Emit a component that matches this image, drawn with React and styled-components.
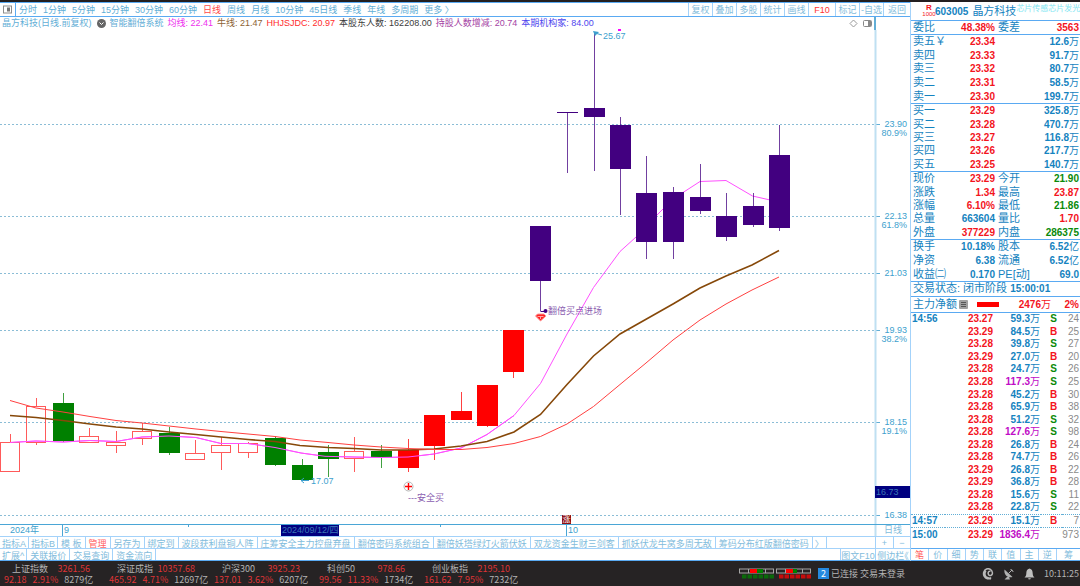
import React from "react";
import styled, { createGlobalStyle } from "styled-components";

const SANS = '"Liberation Sans", "Noto Sans CJK SC", sans-serif';
const c = {
  line: "#5aaaf2",
  soft: "#a3d2fa",
  sky: "#62aed6",
  pale: "#82bcdc",
  blue: "#1583c0",
  red: "#f3141d",
  green: "#0a8a0a",
  magenta: "#c00cc6",
  gray: "#8a8a8a",
  navy: "#000080",
  purple: "#420080",
};

const Global = createGlobalStyle`
  * { box-sizing: border-box; }
  body { margin: 0; background: #fff; font-family: ${SANS}; font-size: 9px; }
  button { font: inherit; color: inherit; background: none; border: 0; padding: 0; margin: 0; white-space: nowrap; cursor: pointer; }
  table { border-collapse: collapse; border-spacing: 0; }
  th, td { padding: 0; font-weight: inherit; text-align: left; white-space: nowrap; }
`;

const Page = styled.div`
  display: flex;
  flex-direction: column;
  min-height: 100vh;
  border-top: 2px solid #231f20;
`;
const Main = styled.div`
  display: flex;
  flex: 1;
`;
const ChartColumn = styled.main`
  display: flex;
  flex-direction: column;
  flex: 1;
  min-width: 0;
`;

/* ---------- toolbar ---------- */
const Toolbar = styled.nav`
  display: flex;
  height: 15px;
  border-top: 1px solid ${c.line};
  border-bottom: 1px solid ${c.line};
  color: ${c.sky};
`;
const PanelToggle = styled.button`
  display: flex;
  align-items: center;
  justify-content: center;
  width: 16px;
  border-right: 1px solid ${c.line};
`;
const Periods = styled.div`
  display: flex;
  flex: 1;
  gap: 6px;
  padding-left: 3px;
  overflow: hidden;
`;
const PeriodButton = styled.button`
  color: ${(p) => (p.$active ? "#ff4a4a" : c.sky)};
`;
const ToolButton = styled.button`
  width: ${(p) => (p.$wide ? "27px" : "24px")};
  border-left: 1px solid ${c.soft};
  color: ${(p) => (p.$hot ? "#f33" : c.pale)};
`;

/* ---------- legend ---------- */
const Legend = styled.div`
  display: flex;
  height: 13px;
  line-height: 13px;
  white-space: nowrap;
`;
const LegendItems = styled.div`
  display: flex;
  flex: 1;
  align-items: center;
  gap: 4px;
  padding-left: 2px;
  overflow: hidden;
`;
const Metric = styled.span`
  color: ${(p) => p.$color};
`;
const LegendTitle = styled.span`
  color: ${c.sky};
`;
const LegendTools = styled.div`
  display: flex;
  align-items: center;
  gap: 5px;
  padding-right: 2px;
`;
const AxisGutter = styled.div`
  width: 36px;
  border-left: 2px solid ${c.sky};
`;

/* ---------- chart ---------- */
const ChartSvg = styled.svg`
  display: block;
  width: 100%;
  height: auto;
  overflow: visible;
  font-family: ${SANS};
  font-size: 9px;
`;

/* ---------- bottom tabs ---------- */
const TabRow = styled.nav`
  display: flex;
  height: ${(p) => (p.$last ? "13px" : "12px")};
  border-top: 1px solid ${c.soft};
  border-bottom: ${(p) => (p.$last ? `1px solid ${c.line}` : "0")};
  color: ${c.pale};
`;
const Tab = styled.button`
  padding: 0 ${(p) => (p.$compact ? "2px" : "3px")};
  border-right: 1px solid ${c.soft};
  color: ${(p) => (p.$hot ? "#ff6464" : "inherit")};
`;
const Spacer = styled.div`
  flex: 1;
`;
const SideTab = styled.button`
  width: ${(p) => p.$w}px;
  border-left: 1px solid ${c.soft};
  font-feature-settings: "halt";
`;

/* ---------- quote panel ---------- */
const Quote = styled.aside`
  display: flex;
  flex-direction: column;
  width: 170px;
  flex: none;
  border-left: 1px solid ${c.soft};
  color: ${c.blue};
  font-size: 10px;
  line-height: 13px;
`;
const StockTitle = styled.header`
  display: flex;
  align-items: center;
  height: 19px;
  padding-left: 12px;
  overflow: hidden;
  border-bottom: 1px solid ${c.line};
  white-space: nowrap;
`;
const RankBadge = styled.span`
  display: flex;
  flex-direction: column;
  align-items: center;
  width: 12px;
  font-size: 6px;
  line-height: 7px;
  color: ${c.red};
`;
const RankLetter = styled.b`
  font-size: 8px;
`;
const StockName = styled.span`
  margin-left: 4px;
  font-size: 11px;
`;
const Concepts = styled.span`
  align-self: flex-start;
  font-size: 8px;
  color: #7fe6f2;
`;
const QuoteTable = styled.table`
  width: 100%;
  height: ${(p) => p.$h}px;
  table-layout: fixed;
  border-bottom: 1px solid ${c.line};
`;
const Label = styled.th`
  padding-left: 2px !important;
  font-size: 11px;
  overflow: visible;
`;
const Value = styled.td`
  padding-right: 1px !important;
  text-align: right !important;
  font-weight: bold !important;
  color: ${(p) => c[p.$tone || "blue"]};
`;
const Unit = styled.span`
  font-weight: normal;
`;
const StatusLine = styled.div`
  height: 15px;
  padding-left: 2px;
  border-bottom: 1px solid ${c.line};
  font-size: 11px;
`;
const Clock = styled.b`
  font-size: 10px;
`;
const NetFlow = styled.div`
  display: flex;
  align-items: center;
  height: 16px;
  padding: 0 1px 0 2px;
  border-bottom: 1px solid ${c.line};
  font-size: 11px;
`;
const MenuMark = styled.button`
  display: flex;
  margin: 0 9px 0 2px;
`;
const FlowBar = styled.span`
  width: 22px;
  height: 5px;
  background: #f00;
`;
const FlowValue = styled.b`
  flex: 1;
  text-align: right;
  font-size: 10px;
  color: ${c.red};
`;
const FlowShare = styled.b`
  width: 28px;
  text-align: right;
  font-size: 10px;
  color: ${c.red};
`;
const Ticks = styled.div`
  flex: 1;
`;
const TickTable = styled.table`
  width: 100%;
  height: 228px;
  table-layout: fixed;
  line-height: 12px;
`;
const TickRow = styled.tr`
  border-top: ${(p) => (p.$dotted ? `1px dotted ${c.sky}` : "0")};
`;
const TickTime = styled.th`
  padding-left: 1px !important;
  font-weight: bold !important;
`;
const Side = styled.td`
  padding-left: 4px !important;
  text-align: center !important;
  font-weight: bold !important;
  color: ${(p) => c[p.$tone]};
`;
const Count = styled.td`
  padding-right: 1px !important;
  text-align: right !important;
  color: ${c.gray};
`;
const QuoteTabs = styled.nav`
  display: flex;
  height: 13px;
  border-top: 1px solid ${c.line};
  border-bottom: 1px solid ${c.line};
  font-size: 9px;
  color: ${c.pale};
`;
const QuoteTab = styled.button`
  flex: ${(p) => (p.$last ? "0 0 23px" : "1")};
  border-right: ${(p) => (p.$last ? "0" : `1px solid ${c.soft}`)};
  color: ${(p) => (p.$hot ? "#ff5050" : "inherit")};
`;

/* ---------- status bar ---------- */
const StatusBar = styled.footer`
  display: flex;
  align-items: center;
  height: 25px;
  overflow: hidden;
  background: #262324;
  color: #b4b4b4;
  font-family: "Noto Sans CJK SC", sans-serif;
  font-size: 9px;
  line-height: 11px;
  white-space: nowrap;
`;
const IndexCard = styled.div`
  width: 105px;
  padding-left: 4px;
`;
const IndexHead = styled.div`
  display: flex;
  justify-content: space-between;
  width: 78px;
  margin-left: 8px;
`;
const IndexBody = styled.div`
  display: flex;
  gap: 6px;
`;
const Rise = styled.span`
  color: #df3436;
`;
const Meters = styled.svg`
  margin-left: auto;
  flex: none;
`;
const Connection = styled.div`
  display: flex;
  align-items: center;
  gap: 2px;
  width: 164px;
  margin-left: 6px;
`;
const CountBadge = styled.span`
  width: 11px;
  background: #2589e0;
  color: #fff;
  text-align: center;
`;
const StatusIcons = styled.div`
  display: flex;
  align-items: center;
  gap: 9px;
  margin-right: 9px;
`;
const StatusTime = styled.time`
  padding-right: 1px;
`;

/* ---------- data ---------- */
const periods = ["分时", "1分钟", "5分钟", "15分钟", "30分钟", "60分钟", "日线", "周线", "月线", "10分钟", "45日线", "季线", "年线", "多周期", "更多 〉"];
const tools = ["复权", "叠加", "多股", "统计", "画线", "F10", "标记", "-自选", "返回"];
const metrics = [
  ["均线: 22.41", "#ee2fee"],
  ["牛线: 21.47", "#8d6234"],
  ["HHJSJDC: 20.97", "#ff2b2b"],
  ["本股东人数: 162208.00", "#3c3c3c"],
  ["持股人数增减: 20.74", "#a443a4"],
  ["本期机构家: 84.00", "#4f46ee"],
];
const tabs = ["指标A", "指标B", "模 板", "管理", "另存为", "绑定到", "波段获利盘铜人阵", "庄筹安全主力控盘弃盘", "翻倍密码系统组合", "翻倍妖塔绿灯火箭伏妖", "双龙资金生财三剑客", "抓妖伏龙牛窝多周无敌", "筹码分布红版翻倍密码", "〉"];
const extras = ["扩展^", "关联报价", "交易查询", "资金流向"];

const asks = [["卖五￥", "23.34", "12.6"], ["卖四", "23.33", "91.7"], ["卖三", "23.32", "80.7"], ["卖二", "23.31", "58.5"], ["卖一", "23.30", "199.7"]];
const bids = [["买一", "23.29", "325.8"], ["买二", "23.28", "470.7"], ["买三", "23.27", "116.8"], ["买四", "23.26", "217.7"], ["买五", "23.25", "140.7"]];
const book = (rows) => rows.map(([l, p, v]) => [l, p, "red", "", v, "blue", "万"]);
const ratio = [["委比", "48.38%", "red", "委差", "3563", "red"]];
const stats = [
  ["现价", "23.29", "red", "今开", "21.90", "green"],
  ["涨跌", "1.34", "red", "最高", "23.87", "red"],
  ["涨幅", "6.10%", "red", "最低", "21.86", "green"],
  ["总量", "663604", "blue", "量比", "1.70", "red"],
  ["外盘", "377229", "red", "内盘", "286375", "green"],
];
const finance = [
  ["换手", "10.18%", "blue", "股本", "6.52", "blue", "亿"],
  ["净资", "6.38", "blue", "流通", "6.52", "blue", "亿"],
  ["收益㈡", "0.170", "blue", "PE[动]", "69.0", "blue"],
];
const ticks = [
  ["14:56", "23.27", "59.3", "S", 24], ["", "23.29", "84.5", "B", 25], ["", "23.28", "39.8", "S", 27],
  ["", "23.29", "27.0", "B", 20], ["", "23.28", "24.7", "S", 26], ["", "23.28", "117.3", "S", 25],
  ["", "23.28", "45.2", "B", 30], ["", "23.28", "65.9", "B", 38], ["", "23.28", "51.2", "S", 32],
  ["", "23.28", "127.6", "S", 98], ["", "23.28", "26.8", "B", 24], ["", "23.28", "74.7", "B", 26],
  ["", "23.29", "26.8", "B", 22], ["", "23.29", "36.8", "B", 28], ["", "23.28", "15.6", "S", 11],
  ["", "23.28", "22.8", "S", 22], ["14:57", "23.29", "15.1", "B", 7], ["15:00", "23.29", "1836.4", "", 973],
];
const indices = [
  ["上证指数", "3261.56", "92.18", "2.91%", "8279亿"],
  ["深证成指", "10357.68", "465.92", "4.71%", "12697亿"],
  ["沪深300", "3925.23", "137.01", "3.62%", "6207亿"],
  ["科创50", "978.66", "99.56", "11.33%", "1734亿"],
  ["创业板指", "2195.10", "161.62", "7.95%", "7232亿"],
];

/* candle: [kind, x, body top, body bottom, wick top, wick bottom] */
const candles = [
  ["h", 10, 442, 471, 434, 471], ["h", 36, 406, 442, 398, 445], ["g", 63, 403, 441, 393, 442],
  ["h", 89, 436, 442, 428, 442], ["h", 116, 442, 445, 431, 453], ["h", 142, 431, 438, 423, 445],
  ["g", 169, 433, 453, 427, 455], ["h", 195, 453, 459, 440, 460], ["h", 221, 445, 452, 437, 470],
  ["h", 248, 443, 452, 442, 458], ["g", 275, 438, 465, 436, 466], ["g", 302, 465, 480, 459, 481],
  ["g", 328, 452, 459, 445, 477], ["h", 354, 451, 458, 437, 472], ["g", 381, 451, 457, 445, 468],
  ["r", 408, 450, 468, 439, 472], ["r", 434, 415, 446, 415, 460], ["r", 461, 411, 420, 392, 420],
  ["r", 487, 385, 426, 385, 427], ["r", 513, 330, 372, 330, 378], ["p", 540, 226, 281, 226, 311],
  ["p", 567, 112, 113, 112, 173], ["p", 594, 108, 117, 32, 171], ["p", 620, 125, 169, 117, 215],
  ["p", 646, 193, 242, 156, 259], ["p", 673, 192, 242, 187, 259], ["p", 700, 197, 211, 164, 214],
  ["p", 726, 216, 237, 193, 241], ["p", 753, 206, 225, 193, 227], ["p", 779, 155, 228, 125, 231],
];
const fills = { g: "#008000", r: "#ff0000", p: c.purple };
const maFast = "10,442.5 36,441 63,442 90,440.5 116,441.5 142,437 169,436 196,437.5 221,443.5 248,443.5 275,447.5 301,453 325,456.3 354,457 381,457.5 408,457 434,454 461,448 487,434.5 514,415.5 540.5,383.5 567,334 593.5,287.5 620,251.5 646,228 657,215 663,209 683,192.5 700,181.5 726,180.5 752.5,196 779,202";
const maBull = "10,415.5 36,417.5 63,420.5 90,424 116,427 142,429 169,432 196,434.5 221,437 248,439.5 275,441.5 300,445.5 328,447.5 354,448.5 381,450 408,450 434,449 461,446 487,441.5 514,432 540.5,414.5 567,384.5 593.5,356 620,334 646.5,319 673,304 700,288 726,276 752,265 779,250.5";
const maSlow = "10,400.5 36,408 63,412 90,416.5 116,420.5 142,423 169,426 196,429 221,431.5 248,434 275,436.5 300,440 328,442.5 354,445 381,447 408,448.5 434,449.5 461,449.5 487,447.5 514,443.5 540.5,436.5 567,424 593.5,406.5 620,384.5 646,363 673,340 700,320 726,304 752,290 779,277";
const levels = [[124, "23.90", "80.9%"], [216, "22.13", "61.8%"], [273, "21.03"], [330, "19.93", "38.2%"], [422, "18.15", "19.1%"], [515, "16.38"]];

/* ---------- parts ---------- */
function Candle({ d: [kind, x, top, bottom, high, low] }) {
  if (kind === "h") {
    return (
      <g stroke="#ff5a5a" fill="none">
        <path d={`M${x + 0.5} ${high}V${top}M${x + 0.5} ${bottom}V${low}`} />
        <rect x={x - 9.5} y={top + 0.5} width="19" height={bottom - top} />
      </g>
    );
  }
  const f = fills[kind];
  return (
    <g>
      <path d={`M${x + 0.5} ${high}V${low}`} stroke={f} strokeOpacity="0.75" />
      <rect x={x - 10} y={top} width="21" height={bottom - top} fill={f} />
    </g>
  );
}

function Chart() {
  return (
    <ChartSvg viewBox="0 30 910 506" role="img" aria-label="K线图">
      {levels.map(([y, price, pct]) => (
        <g key={y} fill="#3d9fce">
          <path d={`M0 ${y + 0.5}H875`} stroke="#8bbdd6" strokeDasharray="2 2" />
          <path d={`M875 ${y + 0.5}H880`} stroke={c.sky} />
          <text x="907" y={y + 3} textAnchor="end">{price}</text>
          {pct && <text x="907" y={y + 12} textAnchor="end">{pct}</text>}
        </g>
      ))}
      <path d="M875.5 30V536" stroke="#bfe0f2" strokeWidth="2" />
      <g fill="none">
        <polyline points={maFast} stroke="#ff50ff" />
      </g>
      {candles.map((d) => <Candle key={d[1]} d={d} />)}
      <g fill="none">
        <polyline points={maFast.split(" ").slice(0, 20).join(" ")} stroke="#ff50ff" />
        <polyline points={maBull} stroke="#864809" strokeWidth="1.6" />
        <polyline points={maSlow} stroke="#ff4040" />
      </g>

      <g fill="#3d9fce" stroke="none">
        <path d="M593 31l6 1-4 4z" />
        <path d="M595 33l7 2" stroke="#3d9fce" />
        <text x="603" y="39">25.67</text>
        <path d="M301 480.500h8M304 478l-3 2.500 3 2.500" stroke="#3d9fce" fill="none" />
        <text x="311" y="484">17.07</text>
      </g>
      <rect x="618" y="29" width="3" height="2" fill="#f0f" />

      <path d="M540.500 311.500h4" stroke={c.purple} />
      <circle cx="545.5" cy="311" r="2" fill={c.purple} />
      <text x="548" y="314" fill="#8a5db0">翻倍买点进场</text>
      <path d="M537.500 314h6.500l2 2-5.500 5-5-5z" fill="#f22" stroke="#ff9a9a" />
      <path d="M537.500 316.500h6M540.500 317v2" stroke="#fff" strokeOpacity="0.6" />

      <circle cx="408.5" cy="486.500" r="4.5" fill="#fff" stroke="#b5b5b5" />
      <path d="M405 486.500h7M408.500 483v7" stroke="#f00" strokeWidth="1.4" />
      <text x="408" y="501" fill="#8a5db0">---安全买</text>

      <rect x="562" y="515" width="9" height="9" fill="#8f1010" />
      <text x="562.5" y="522" fill="#fff" style={{ fontSize: 8 }}>涨</text>

      <path d="M0 524.500H910" stroke="#4aa6d6" />
      <path d="M188.500 524v3M440.500 524v3M62.500 524v12M566.500 524v12" stroke="#4aa6d6" />
      <g fill="#3d9fce">
        <text x="10" y="533">2024年</text>
        <text x="64" y="533">9</text>
        <text x="568" y="533">10</text>
        <text x="884" y="533" fill={c.pale}>日线</text>
      </g>
      <rect x="281" y="525" width="58" height="11" fill={c.navy} />
      <text x="282" y="533" fill="#3c78b4">2024/09/12/四</text>
      <rect x="875" y="486" width="36" height="12" fill={c.navy} />
      <text x="876" y="495" fill="#3c78b4">16.73</text>
    </ChartSvg>
  );
}

function QuoteGrid({ rows, height }) {
  return (
    <QuoteTable $h={height}>
      <colgroup>
        <col style={{ width: 36 }} />
        <col style={{ width: 49 }} />
        <col style={{ width: 34 }} />
        <col />
      </colgroup>
      <tbody>
        {rows.map(([a, av, at, b, bv, bt, unit]) => (
          <tr key={a}>
            <Label scope="row">{a}</Label>
            <Value $tone={at}>{av}</Value>
            <Label>{b}</Label>
            <Value $tone={bt}>{bv}{unit && <Unit>{unit}</Unit>}</Value>
          </tr>
        ))}
      </tbody>
    </QuoteTable>
  );
}

function QuotePanel() {
  return (
    <Quote>
      <StockTitle>
        <RankBadge><RankLetter>R</RankLetter>1000</RankBadge>
        <b>603005</b>
        <StockName>晶方科技</StockName>
        <Concepts>芯片传感芯片发光</Concepts>
      </StockTitle>
      <QuoteGrid rows={ratio} height={14} />
      <QuoteGrid rows={book(asks)} height={69} />
      <QuoteGrid rows={book(bids)} height={68} />
      <QuoteGrid rows={stats} height={68} />
      <QuoteGrid rows={finance} height={42} />
      <StatusLine>交易状态: 闭市阶段 <Clock>15:00:01</Clock></StatusLine>
      <NetFlow>
        主力净额
        <MenuMark aria-label="净额菜单">
          <svg width="9" height="9"><rect width="9" height="9" rx="1" fill="#a0a0a0" /><path d="M2 2.500h5M2 4.500h5M2 6.500h5" stroke="#555" /></svg>
        </MenuMark>
        <FlowBar />
        <FlowValue>2476<Unit>万</Unit></FlowValue>
        <FlowShare>2%</FlowShare>
      </NetFlow>
      <Ticks>
        <TickTable>
          <colgroup>
            <col style={{ width: 34 }} />
            <col style={{ width: 49 }} />
            <col style={{ width: 47 }} />
            <col style={{ width: 21 }} />
            <col />
          </colgroup>
          <tbody>
            {ticks.map(([t, p, v, s, n], i) => (
              <TickRow key={i} $dotted={i > 15}>
                <TickTime scope="row">{t}</TickTime>
                <Value $tone="red">{p}</Value>
                <Value $tone={parseFloat(v) > 100 ? "magenta" : "blue"}>{v}<Unit>万</Unit></Value>
                <Side $tone={s === "S" ? "green" : "red"}>{s}</Side>
                <Count>{n}</Count>
              </TickRow>
            ))}
          </tbody>
        </TickTable>
      </Ticks>
      <QuoteTabs>
        {[..."笔价细势联值主逆筹"].map((t, i) => <QuoteTab key={t} $hot={i === 0} $last={i === 8}>{t}</QuoteTab>)}
      </QuoteTabs>
    </Quote>
  );
}

function MeterIcon() {
  const cells = [0, 1, 2, 3, 4, 5];
  return (
    <Meters width="73" height="11" viewBox="0 0 73 11" aria-hidden="true">
      {[0, 37].map((x, g) => (
        <g key={x} transform={`translate(${x} 0)`}>
          <rect x="0.5" y="1" width="34" height="4" fill="none" stroke="#a5a5a5" />
          <path d="M9.500 1v4M26.500 1v4" stroke="#a5a5a5" />
          <rect x={g ? 10 : 11} y="1" width="7" height="4" fill="#f00" />
          <rect x={g ? 17 : 18} y="1" width={g ? 4 : 6} height="4" fill="#008000" />
          {cells.map((k) => <rect key={k} x={3 + k * 5.5} y="6.500" width="4.500" height="4" fill={g ? "#c80c0c" : "#0a6a0a"} />)}
        </g>
      ))}
    </Meters>
  );
}

export default function App() {
  return (
    <Page>
      <Global />
      <Main>
        <ChartColumn>
          <Toolbar>
            <PanelToggle aria-label="侧栏">
              <svg width="9" height="9"><rect x="0.5" y="1" width="8" height="7" fill="#fff" stroke="#8d8d8d" /><rect x="4" y="2.500" width="3" height="4" fill="#777" /></svg>
            </PanelToggle>
            <Periods>
              {periods.map((p) => <PeriodButton key={p} $active={p === "日线"}>{p}</PeriodButton>)}
            </Periods>
            {tools.map((t) => <ToolButton key={t} $hot={t === "F10"} $wide={t === "F10" || t === "返回"}>{t}</ToolButton>)}
          </Toolbar>
          <Legend>
            <LegendItems>
              <LegendTitle>晶方科技(日线.前复权)</LegendTitle>
              <svg width="10" height="9" aria-hidden="true"><circle cx="5.500" cy="4.500" r="4.500" fill="#666" /><path d="M3.500 3.500l2 2 2-2" stroke="#fff" fill="none" /></svg>
              <LegendTitle>智能翻倍系统</LegendTitle>
              {metrics.map(([t, color]) => <Metric key={t} $color={color}>{t}</Metric>)}
            </LegendItems>
            <LegendTools>
              <svg width="9" height="9" aria-hidden="true"><path d="M4.500 1L8 4.500 4.500 8 1 4.500z" fill="none" stroke="#999" /></svg>
              <svg width="9" height="9" aria-hidden="true"><rect x="0.5" y="1.500" width="8" height="6" rx="1" fill="none" stroke="#888" /><rect x="5" y="2" width="3" height="5" fill="#888" /></svg>
            </LegendTools>
            <AxisGutter />
          </Legend>
          <Chart />
          <TabRow>
            {tabs.map((t, i) => <Tab key={t} $compact={i < 2 || i === 13} $hot={t === "管理"}>{t}</Tab>)}
            <Spacer />
            <SideTab $w={18}>+</SideTab>
            <SideTab $w={17}>−</SideTab>
          </TabRow>
          <TabRow $last>
            {extras.map((t, i) => <Tab key={t} $compact={i === 0}>{t}</Tab>)}
            <Spacer />
            <SideTab $w={35}>图文F10</SideTab>
            <SideTab $w={35}>侧边栏《</SideTab>
          </TabRow>
        </ChartColumn>
        <QuotePanel />
      </Main>
      <StatusBar>
        {indices.map(([name, v, d, pct, amt]) => (
          <IndexCard key={name}>
            <IndexHead><span>{name}</span><Rise>{v}</Rise></IndexHead>
            <IndexBody><Rise>{d}</Rise><Rise>{pct}</Rise><span>{amt}</span></IndexBody>
          </IndexCard>
        ))}
        <MeterIcon />
        <Connection>
          <CountBadge>2</CountBadge>
          已连接 交易未登录
        </Connection>
        <StatusIcons>
          <svg width="12" height="12" viewBox="0 0 12 12" fill="none" stroke="#b8b8b8"><path d="M9 9.500A4.500 5 0 1 1 10.500 5c0 2.500-3 3.500-4 1.500S7 2.500 8.500 3.500M4 3c-2 2-1 6 1.500 6.500L9 11" strokeWidth="1.500" /></svg>
          <svg width="12" height="12" viewBox="0 0 12 12"><path d="M1.500 1.500c-1 5 3 9 8 7.500zM4 9l-2.500 2.500H7L6 9z" fill="#b0b0b0" /><path d="M5.500 5.500L9 2M7.500 1.500c1.500 0 2.500 1 2.500 2.500" stroke="#b0b0b0" fill="none" /></svg>
          <svg width="11" height="12" viewBox="0 0 11 12" fill="#c0c0c0"><path d="M5.500 0.500C3 1 2.300 3 2.300 5.500 2.300 7.500 1.500 8.500 0.500 9.500h10c-1-1-1.800-2-1.800-4C8.700 3 8 1 5.500 0.500zM4.200 10.200h2.600c-0.200 1.600-2.400 1.600-2.600 0z" /></svg>
        </StatusIcons>
        <StatusTime>10:11:25</StatusTime>
      </StatusBar>
    </Page>
  );
}
